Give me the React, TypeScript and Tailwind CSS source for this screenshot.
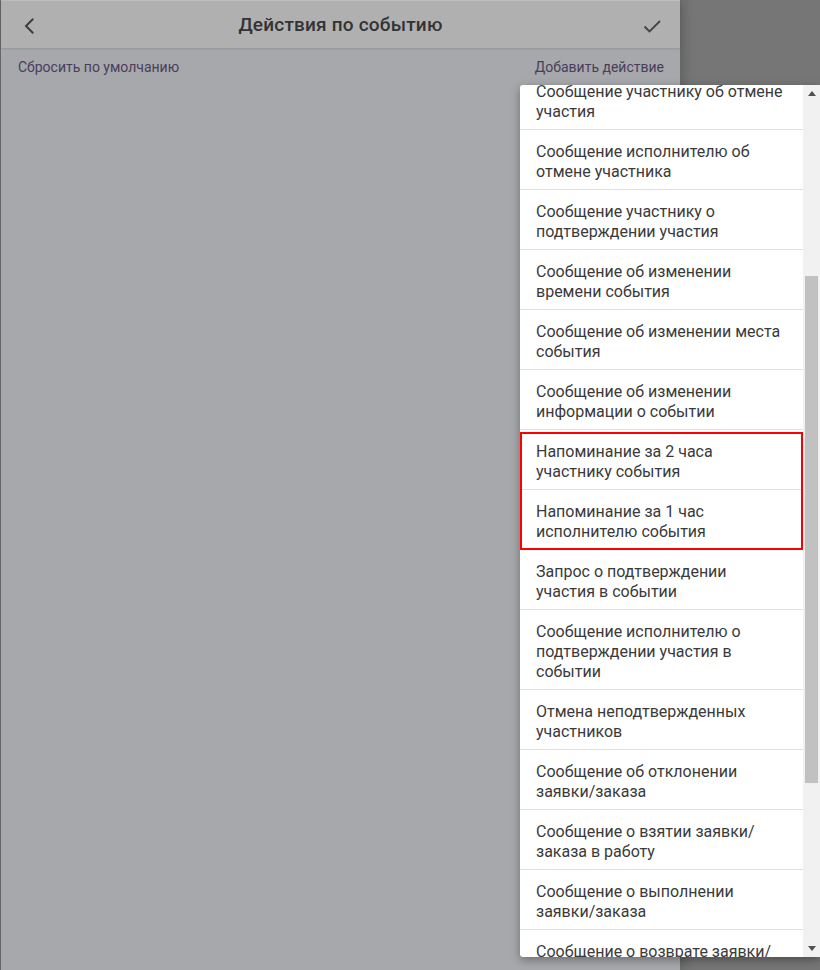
import React from 'react'

const ITEMS: string[][] = [
  ['Сообщение участнику об отмене', 'участия'],
  ['Сообщение исполнителю об', 'отмене участника'],
  ['Сообщение участнику о', 'подтверждении участия'],
  ['Сообщение об изменении', 'времени события'],
  ['Сообщение об изменении места', 'события'],
  ['Сообщение об изменении', 'информации о событии'],
  ['Напоминание за 2 часа', 'участнику события'],
  ['Напоминание за 1 час', 'исполнителю события'],
  ['Запрос о подтверждении', 'участия в событии'],
  ['Сообщение исполнителю о', 'подтверждении участия в', 'событии'],
  ['Отмена неподтвержденных', 'участников'],
  ['Сообщение об отклонении', 'заявки/заказа'],
  ['Сообщение о взятии заявки/', 'заказа в работу'],
  ['Сообщение о выполнении', 'заявки/заказа'],
  ['Сообщение о возврате заявки/', 'заказа'],
]

function Item({ lines }: { lines: string[] }) {
  return (
    <div className="border-b border-[#e0e0e0] px-4 pt-[12px] pb-[7px] text-[16px] leading-[20px] text-[#3a3a3a] whitespace-nowrap">
      {lines.map(l => <div key={l}>{l}</div>)}
    </div>
  )
}

export default function App() {
  return (
    <div className="relative w-[820px] h-[970px] overflow-hidden bg-[#767676] font-['Roboto',sans-serif]">
      {/* dimmed dialog */}
      <div className="w-[680px] h-full flex flex-col bg-[#a6a8ab] border-l border-[#666] shadow-[4px_0_10px_rgba(0,0,0,0.18)]">
        <div className="h-[48px] flex items-center justify-between px-4 pt-[2px] bg-[#b0b0b0] border-t border-[#bdbdbd] shadow-[0_1px_2px_rgba(0,0,0,0.12)]">
          <svg width="24" height="24" viewBox="0 0 24 24" fill="none" stroke="#3d3d3d" strokeWidth="2">
            <path d="M15.5 5.5L9 12l6.5 6.5" strokeLinecap="square" />
          </svg>
          <span className="text-[19px] font-medium text-[#333] tracking-[0.2px]">Действия по событию</span>
          <svg width="24" height="24" viewBox="0 0 24 24" fill="none" stroke="#444" strokeWidth="1.8">
            <path d="M4.5 12.5l5 5L20 7" />
          </svg>
        </div>
        <div className="flex justify-between pl-[17px] pr-[16px] pt-[11px] text-[14px] leading-[16px] text-[#4a3d5c]">
          <span>Сбросить по умолчанию</span>
          <span>Добавить действие</span>
        </div>
      </div>

      {/* dropdown menu */}
      <div className="absolute left-[520px] top-[85px] w-[300px] h-[872px] flex bg-white rounded-[3px] shadow-[0_3px_10px_rgba(0,0,0,0.35)]">
        <div className="flex-1 overflow-hidden">
          <div className="-mt-[15px]">
            {ITEMS.slice(0, 6).map(l => <Item key={l.join()} lines={l} />)}
            <div className="relative">
              <Item lines={ITEMS[6]} />
              <Item lines={ITEMS[7]} />
              <div className="absolute left-0 right-0 top-[2px] bottom-0 border-2 border-[#ff0000] pointer-events-none" />
            </div>
            {ITEMS.slice(8).map(l => <Item key={l.join()} lines={l} />)}
          </div>
        </div>
        <div className="w-[17px] flex flex-col bg-[#f1f1f1]">
          <div className="h-[17px] flex items-center justify-center">
            <svg width="8" height="5" viewBox="0 0 8 5"><path d="M0 5L4 0l4 5z" fill="#505050" /></svg>
          </div>
          <div className="mt-[174px] h-[507px] mx-[2px] bg-[#c1c1c1]" />
          <div className="flex-1" />
          <div className="h-[17px] flex items-center justify-center">
            <svg width="8" height="5" viewBox="0 0 8 5"><path d="M0 0l4 5 4-5z" fill="#505050" /></svg>
          </div>
        </div>
      </div>
    </div>
  )
}
